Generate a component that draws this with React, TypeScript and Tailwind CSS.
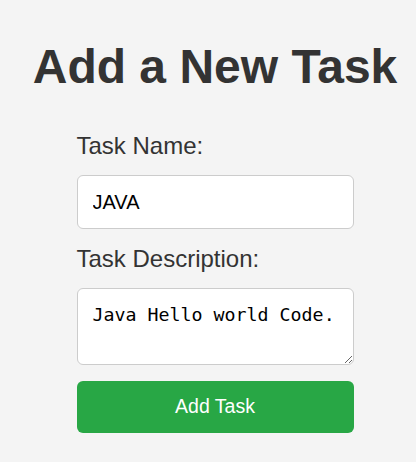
import React, { useState } from "react";

export default function App() {
  const [name, setName] = useState("JAVA");
  const [desc, setDesc] = useState("Java Hello world Code.");

  return (
    <div
      className="min-h-[462px] bg-[#f4f4f4] pl-[14px] text-[#333]"
      style={{ fontFamily: '"Liberation Sans", Arial, sans-serif' }}
    >
      <h1 className="pt-[43px] text-center text-[48px] font-bold leading-[48px]">
        Add a New Task
      </h1>
      <form
        className="mx-auto mt-[41px] w-[277px]"
        onSubmit={(e) => e.preventDefault()}
      >
        <label htmlFor="task-name" className="block text-[24px] leading-[28px]">
          Task Name:
        </label>
        <input
          id="task-name"
          type="text"
          value={name}
          onChange={(e) => setName(e.target.value)}
          className="mt-[15px] block h-[54px] w-full rounded-[6px] border border-[#ccc] bg-white px-[15px] text-[20px] text-black outline-none"
        />
        <label
          htmlFor="task-desc"
          className="mt-[16px] block text-[24px] leading-[28px]"
        >
          Task Description:
        </label>
        <textarea
          id="task-desc"
          value={desc}
          onChange={(e) => setDesc(e.target.value)}
          className="mt-[15px] block h-[77px] w-full rounded-[6px] border border-[#ccc] bg-white px-[15px] pt-[12px] text-[18.3px] text-black outline-none"
          style={{ fontFamily: '"DejaVu Sans Mono", monospace' }}
        />
        <button
          type="submit"
          className="mt-[16px] block h-[52px] w-full rounded-[6px] bg-[#28a745] text-[19.5px] text-white"
        >
          Add Task
        </button>
      </form>
    </div>
  );
}
